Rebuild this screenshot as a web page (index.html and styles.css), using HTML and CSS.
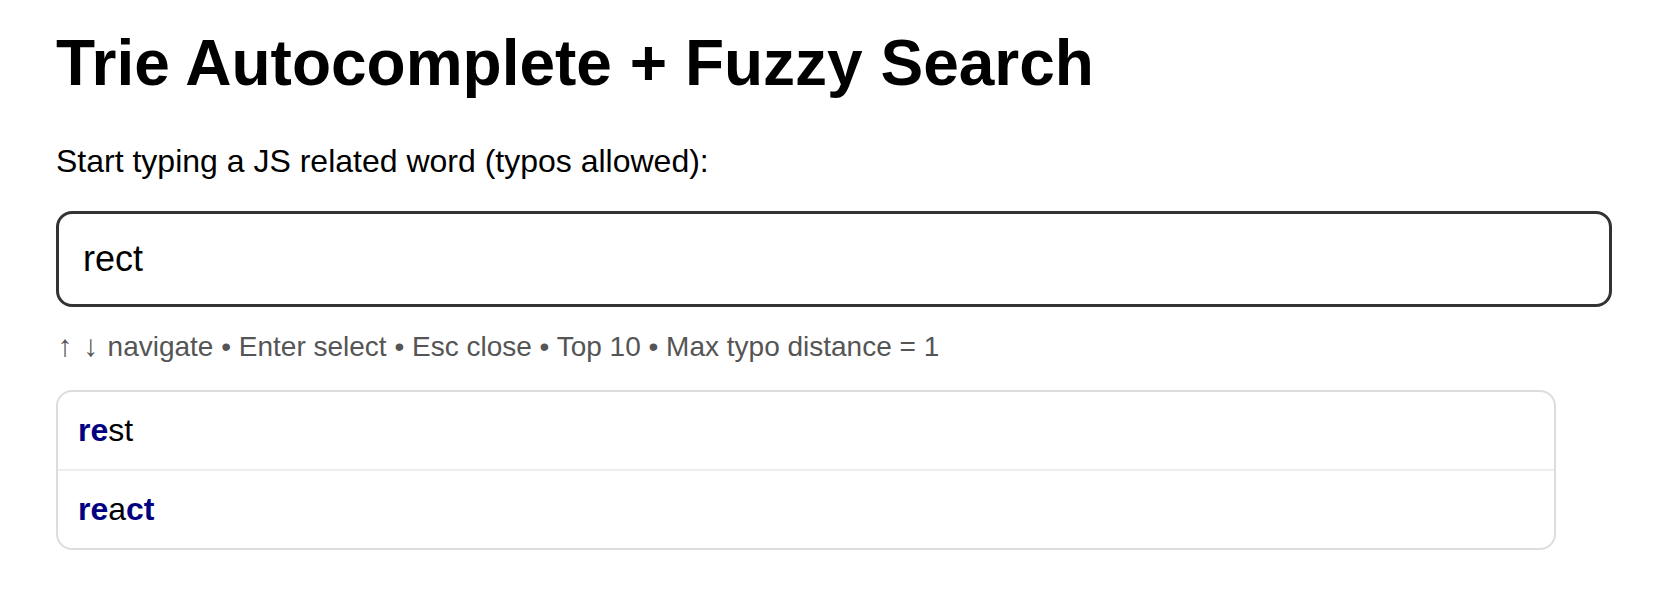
FILE: index.html
```html
<!DOCTYPE html>
<html lang="en">
<head>
<meta charset="utf-8">
<title>Trie Autocomplete + Fuzzy Search</title>
<link rel="stylesheet" href="styles.css">
</head>
<body>
<main class="page">
  <h1 class="title">Trie Autocomplete + Fuzzy Search</h1>
  <label class="label" for="q">Start typing a JS related word (typos allowed):</label>
  <input class="search" id="q" type="text" value="rect" autocomplete="off">
  <div class="hint"><span class="arrow">↑</span> <span class="arrow">↓</span> navigate • Enter select • Esc close • Top 10 • Max typo distance = 1</div>
  <ul class="list">
    <li class="item"><b class="hl">re</b>st</li>
    <li class="item"><b class="hl">re</b>a<b class="hl">ct</b></li>
  </ul>
</main>
</body>
</html>
```
FILE: styles.css
```css
html, body {
  margin: 0;
  padding: 0;
  background: #fff;
}
body {
  font-family: "Liberation Sans", Arial, Helvetica, sans-serif;
  color: #000;
}
.page {
  display: flex;
  flex-direction: column;
  align-items: flex-start;
  padding: 26px 56px 24px;
}
.title {
  margin: 0 0 43px;
  font-size: 64px;
  font-weight: bold;
  line-height: normal;
}
.label {
  display: block;
  margin: 0 0 31px;
  font-size: 32px;
}
.search {
  box-sizing: border-box;
  width: 1556px;
  height: 96px;
  margin: 0;
  border: 3px solid #333;
  border-radius: 16px;
  padding: 0 24px;
  font-family: inherit;
  font-size: 36px;
  color: #000;
  outline: none;
}
.hint {
  margin-top: 24px;
  font-size: 28px;
  color: #555;
}
.arrow {
  display: inline-block;
  width: 18px;
  text-align: center;
  font-size: 30px;
  line-height: 1;
}
.list {
  box-sizing: border-box;
  width: 1500px;
  margin: 27px 0 0;
  padding: 0;
  list-style: none;
  border: 2px solid #ddd;
  border-radius: 16px;
  overflow: hidden;
}
.item {
  padding: 20px 20px;
  font-size: 32px;
  line-height: normal;
  border-bottom: 2px solid #eee;
}
.item:last-child {
  border-bottom: 0;
}
.hl {
  font-weight: bold;
  color: #000080;
}
```
